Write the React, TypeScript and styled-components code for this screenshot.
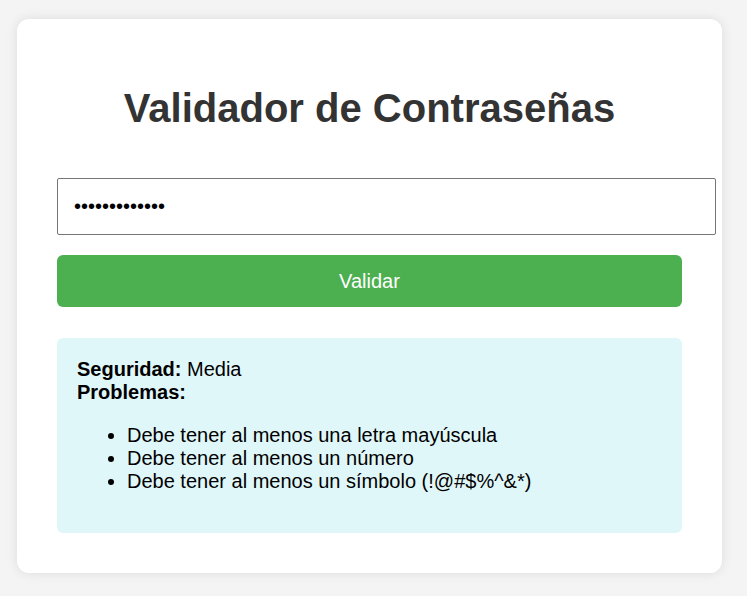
import React, { useState } from "react"
import styled, { createGlobalStyle } from "styled-components"

const GlobalStyle = createGlobalStyle`
  html, body { margin: 0; padding: 0; }
  body {
    background: #f4f4f4;
    font-family: "Liberation Sans", Arial, sans-serif;
    min-height: 100vh;
  }
`

const Page = styled.div`
  padding: 19px 0 0 17px;
`

const Card = styled.div`
  width: 705px;
  box-sizing: border-box;
  background: #fff;
  border-radius: 12px;
  padding: 40px;
  box-shadow: 0 0 12px rgba(0, 0, 0, 0.1);
`

const Title = styled.h1`
  margin: 27px 0 47px;
  text-align: center;
  font-size: 40px;
  font-weight: bold;
  color: #333;
`

const PasswordInput = styled.input`
  display: block;
  width: 100%;
  padding: 16px;
  margin: 0 0 20px;
  font-size: 20px;
  font-family: "Liberation Sans", Arial, sans-serif;
  border: 1px solid #767676;
  border-radius: 2px;
  color: #000;
  outline: none;
`

const ValidateButton = styled.button`
  display: block;
  width: 100%;
  height: 52px;
  padding: 0;
  border: none;
  border-radius: 6px;
  background: #4caf50;
  color: #fff;
  font-size: 20px;
  font-family: "Liberation Sans", Arial, sans-serif;
  cursor: pointer;
`

const Result = styled.div`
  margin-top: 31px;
  padding: 20px;
  background: #e0f7fa;
  border-radius: 6px;
  font-size: 20px;
  line-height: 23px;
  color: #000;
`

const Problems = styled.ul`
  margin: 20px 0;
  padding-left: 50px;
`

const problems = [
  "Debe tener al menos una letra mayúscula",
  "Debe tener al menos un número",
  "Debe tener al menos un símbolo (!@#$%^&*)",
]

export default function App() {
  const [pwd, setPwd] = useState("contraseña123")
  return (
    <>
      <GlobalStyle />
      <Page>
        <Card>
          <Title>Validador de Contraseñas</Title>
          <PasswordInput type="password" value={pwd} onChange={e => setPwd(e.target.value)} />
          <ValidateButton>Validar</ValidateButton>
          <Result>
            <strong>Seguridad:</strong> Media
            <br />
            <strong>Problemas:</strong>
            <Problems>
              {problems.map(p => <li key={p}>{p}</li>)}
            </Problems>
          </Result>
        </Card>
      </Page>
    </>
  )
}
